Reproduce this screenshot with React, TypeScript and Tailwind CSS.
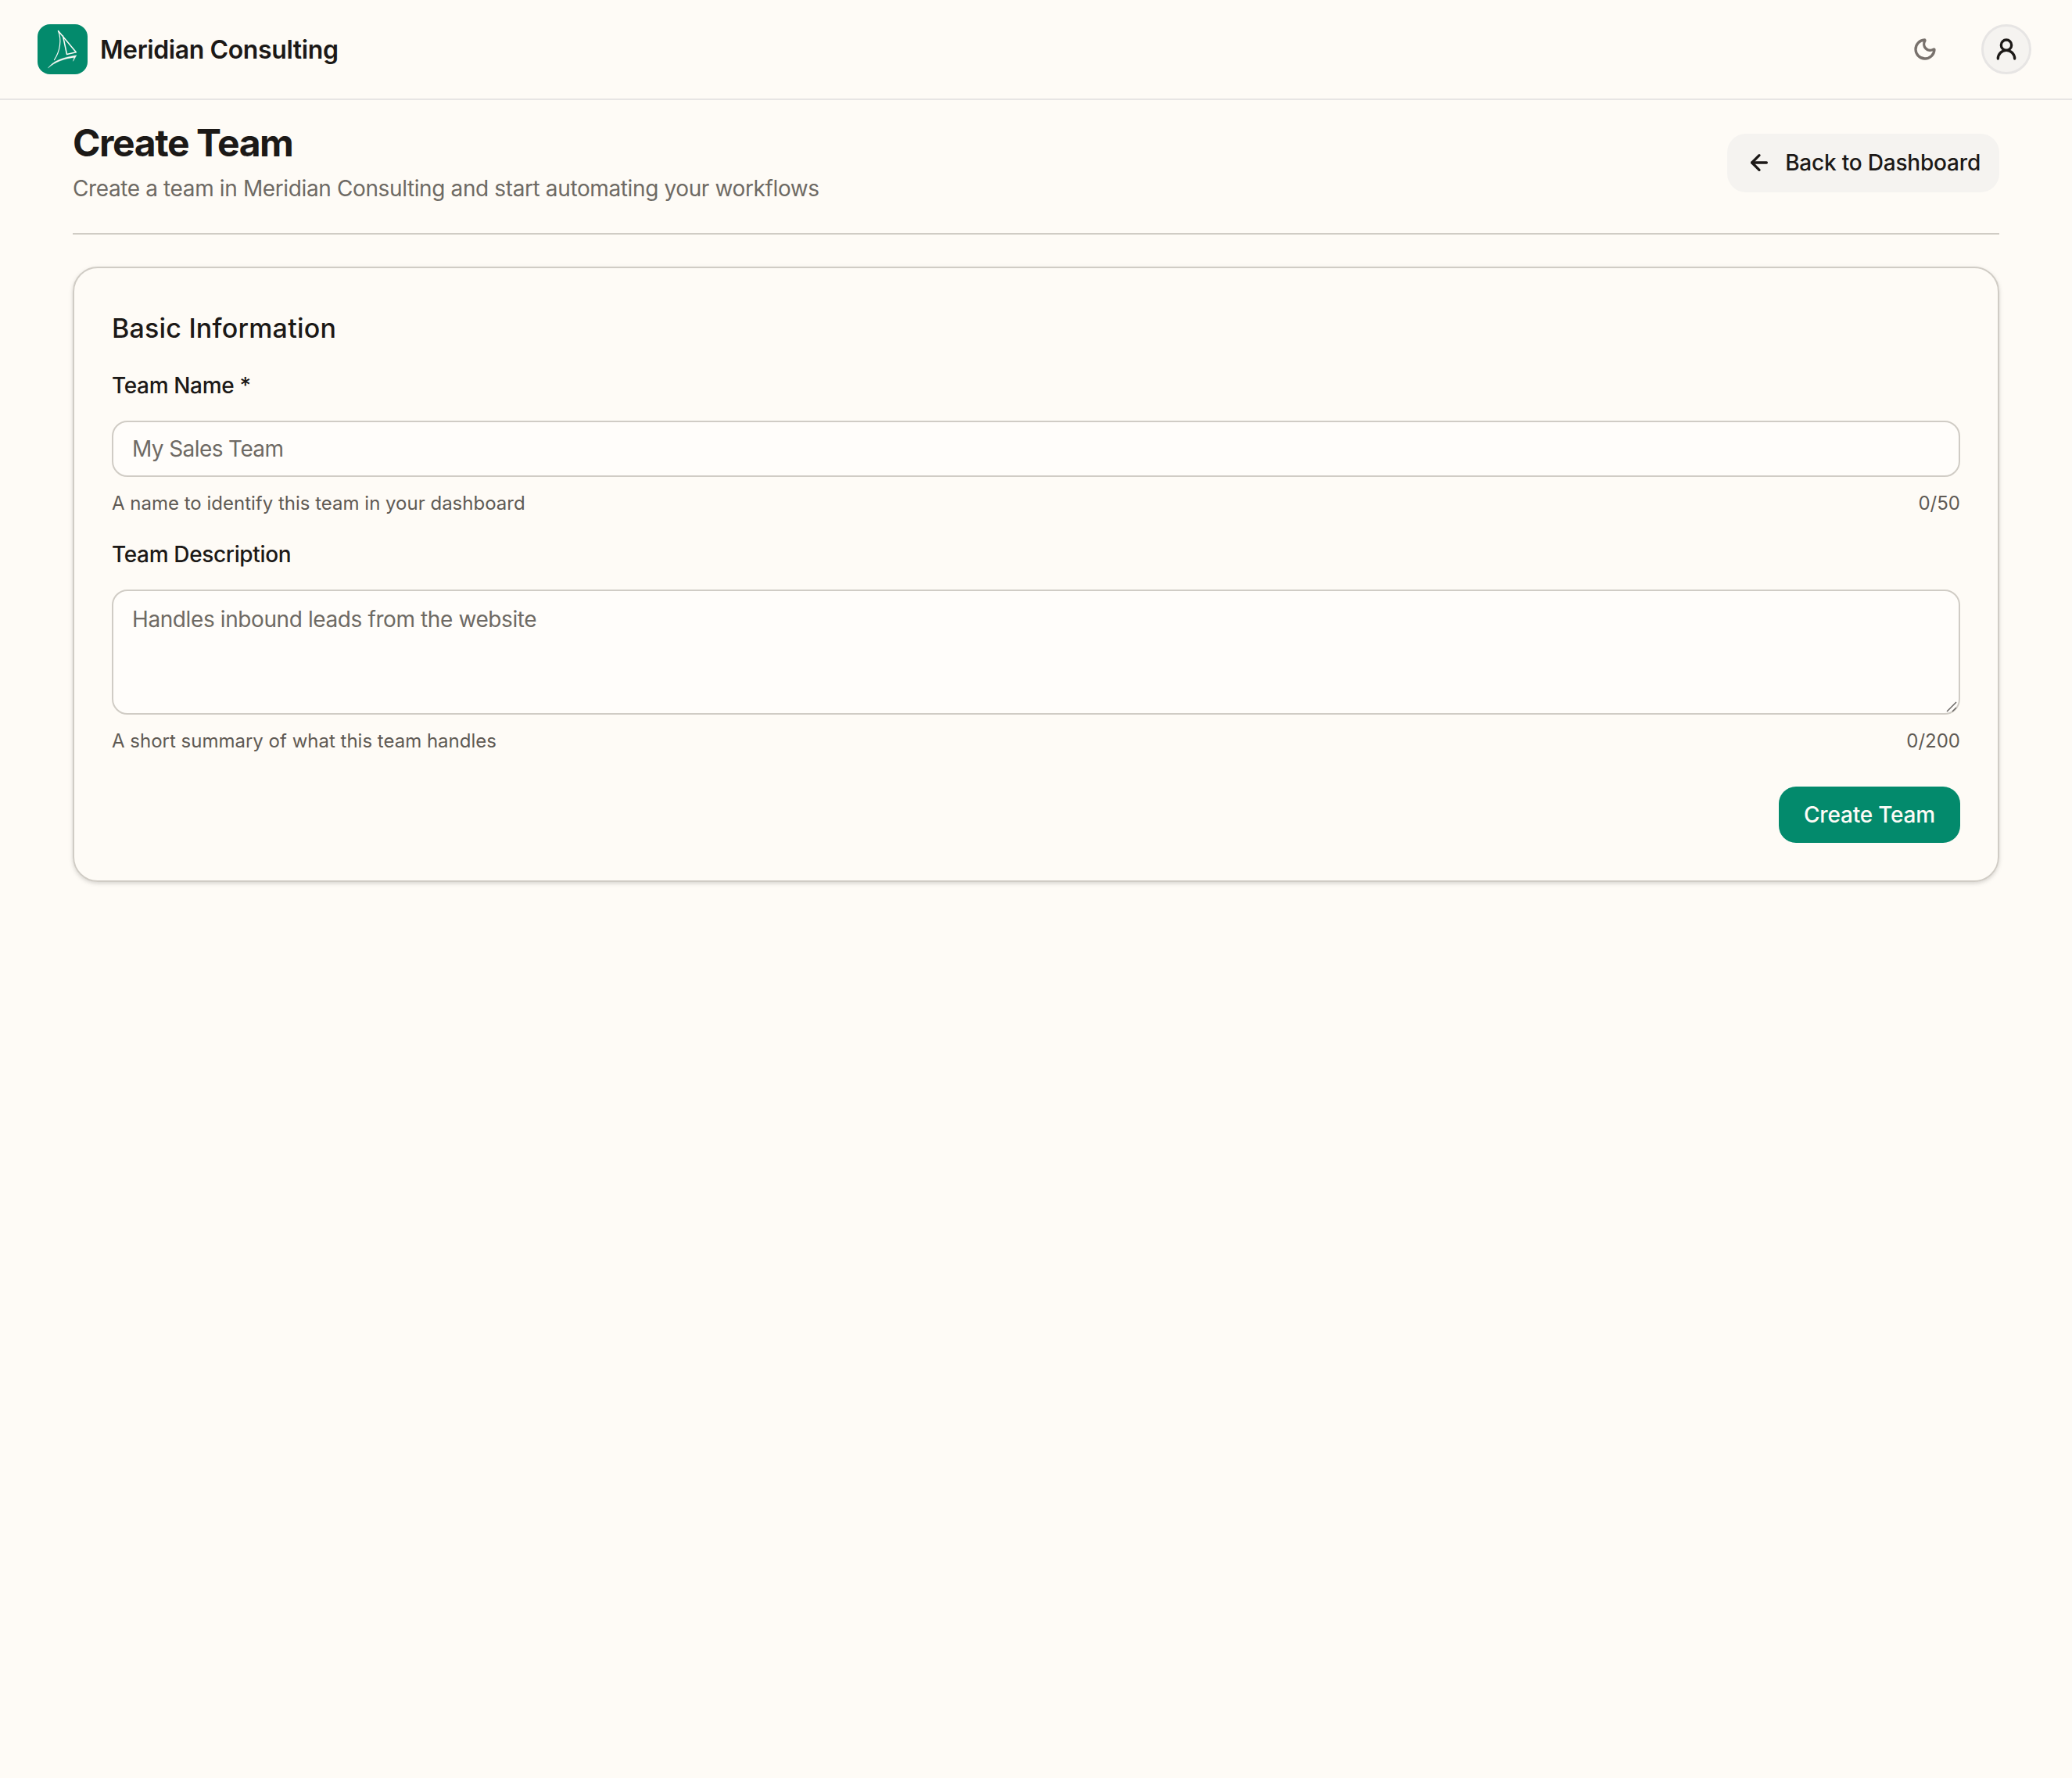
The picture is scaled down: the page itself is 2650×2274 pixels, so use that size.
import { ArrowLeft, Moon, UserRound } from "lucide-react"

function Logo() {
  return (
    <div className="flex h-16 w-16 items-center justify-center rounded-[16px] bg-[#038a6c]">
      <svg viewBox="0 0 64 64" className="h-16 w-16" fill="none" stroke="#fdfbf7" strokeLinecap="round" strokeLinejoin="round">
        <path d="M26.5 8.5C31 20 29 34 21.5 45.5" strokeWidth="1.2" />
        <path d="M26.5 8.5L49.3 35.8L37.5 38.5L32.5 15" strokeWidth="1.5" />
        <path d="M13.7 55.7C20 47 32 42.5 49.8 39.7L45.5 47.3L46.8 42.5C34 44 23 48 13.7 55.7Z" fill="#fdfbf7" strokeWidth="0.4" />
      </svg>
    </div>
  )
}

function Field({ label, hint, count, children }: { label: string; hint: string; count: string; children: React.ReactNode }) {
  return (
    <div>
      <label className="block text-[28px] leading-[40px] font-medium tracking-[-0.35px] text-[#1c1917]">{label}</label>
      <div className="mt-[25px]">{children}</div>
      <div className="mt-[18px] flex items-center justify-between text-[24px] leading-[32px] text-[#5f5a54]">
        <span>{hint}</span>
        <span>{count}</span>
      </div>
    </div>
  )
}

export default function App() {
  return (
    <div className="min-h-[2274px] bg-[#fefbf6] font-['Inter',sans-serif] text-[#1c1917]">
      <header className="flex h-[128px] items-center justify-between border-b-2 border-[#e7e5e4] pr-[52px] pl-12">
        <div className="flex items-center gap-4">
          <Logo />
          <span className="pt-[2px] text-[32px] leading-[48px] font-semibold tracking-[-0.4px]">Meridian Consulting</span>
        </div>
        <div className="flex items-center gap-[56px]">
          <Moon className="h-8 w-8 text-[#78716c]" strokeWidth={2.5} />
          <div className="flex h-16 w-16 items-center justify-center rounded-full border-[3px] border-[#e7e5e4] bg-[#f5f3f0]">
            <UserRound className="h-8 w-8 text-[#1c1917]" strokeWidth={2.5} />
          </div>
        </div>
      </header>

      <main className="px-[93px]">
        <div className="flex items-center justify-between border-b-2 border-[#d0ccc5] pt-[23px] pb-[38px]">
          <div>
            <h1 className="text-[48px] leading-[64px] font-bold tracking-[-1.4px]">Create Team</h1>
            <p className="mt-[7px] text-[28px] leading-[38px] tracking-[-0.38px] text-[#6e6a64]">
              Create a team in Meridian Consulting and start automating your workflows
            </p>
          </div>
          <button className="mt-[5px] flex h-[75px] items-center gap-[17px] rounded-[24px] bg-[#f5f3f0] pr-[24px] pl-[25px] text-[28px] font-medium tracking-[-0.2px]">
            <ArrowLeft className="h-8 w-8" strokeWidth={2.5} />
            Back to Dashboard
          </button>
        </div>

        <section className="mt-[41px] rounded-[32px] border-2 border-[#d0ccc5] px-[48px] pt-[53px] pb-[48px] shadow-[0_2px_6px_rgba(0,0,0,0.1),0_2px_4px_rgba(0,0,0,0.06)]">
          <h2 className="text-[34px] leading-[48px] font-medium tracking-[0.2px]">Basic Information</h2>
          <div className="mt-[29px] flex flex-col gap-[29px]">
            <Field label="Team Name *" hint="A name to identify this team in your dashboard" count="0/50">
              <input
                placeholder="My Sales Team"
                className="block h-[72px] w-full rounded-[20px] border-2 border-[#d0ccc5] bg-[#fffdfa] px-[24px] text-[28px] tracking-[-0.6px] outline-none placeholder:text-[#6e6a64]"
              />
            </Field>
            <Field label="Team Description" hint="A short summary of what this team handles" count="0/200">
              <div className="relative">
                <textarea
                  placeholder="Handles inbound leads from the website"
                  className="block h-[160px] w-full resize-none rounded-[20px] border-2 border-[#d0ccc5] bg-[#fffdfa] px-[24px] py-[16px] text-[28px] leading-[40px] tracking-[-0.4px] outline-none placeholder:text-[#6e6a64]"
                />
                <svg viewBox="0 0 14 14" className="absolute right-[4px] bottom-[3px] h-[14px] w-[14px]" stroke="#6b6865" strokeWidth="1.5" fill="none">
                  <path d="M1 13L13 1M8 13L13 8" />
                </svg>
              </div>
            </Field>
          </div>
          <div className="mt-[42px] flex justify-end">
            <button className="h-[72px] rounded-[22px] bg-[#038a6c] px-[32px] text-[28px] font-medium tracking-[-0.2px] text-[#fdfbf7]">Create Team</button>
          </div>
        </section>
      </main>
    </div>
  )
}
